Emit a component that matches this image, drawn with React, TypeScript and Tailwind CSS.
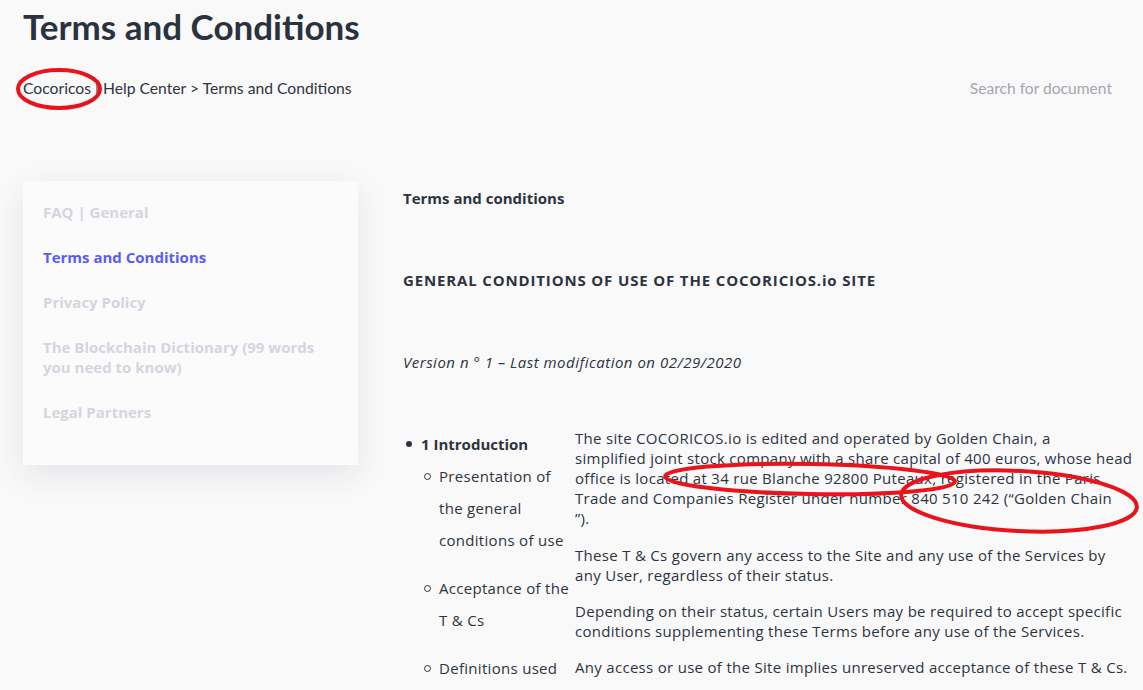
import React from "react";

const sideItems = [
  { label: "FAQ | General", active: false },
  { label: "Terms and Conditions", active: true },
  { label: "Privacy Policy", active: false },
  { label: "The Blockchain Dictionary (99 words you need to know)", active: false },
  { label: "Legal Partners", active: false },
];

// sub entries of the table of contents, wrapped like the page
const subItems = [
  ["Presentation of", "the general", "conditions of use"],
  ["Acceptance of the", "T & Cs"],
  ["Definitions used"],
];

const paragraphs = [
  [
    "The site COCORICOS.io is edited and operated by Golden Chain, a",
    "simplified joint stock company with a share capital of 400 euros, whose head",
    "office is located at 34 rue Blanche 92800 Puteaux, registered in the Paris",
    "Trade and Companies Register under number 840 510 242 (“Golden Chain",
    "”).",
  ],
  [
    "These T & Cs govern any access to the Site and any use of the Services by",
    "any User, regardless of their status.",
  ],
  [
    "Depending on their status, certain Users may be required to accept specific",
    "conditions supplementing these Terms before any use of the Services.",
  ],
  ["Any access or use of the Site implies unreserved acceptance of these T & Cs."],
];

const App: React.FC = () => {
  return (
    <div className="relative w-[1143px] h-[690px] overflow-hidden bg-[#f9f9fa] text-[#2d3440] font-['Open_Sans',sans-serif]">
      {/* header */}
      <div className="px-[23px] pt-[4px] font-['Lato',sans-serif]">
        <h1 className="text-[35px] leading-[44px] font-bold text-[#2b323e]">Terms and Conditions</h1>
        <div className="flex items-center justify-between mt-[29px] pr-[8px]">
          <div className="text-[15.7px] text-[#2f3440]">Cocoricos | Help Center &gt; Terms and Conditions</div>
          <div className="text-[15.6px] text-[#a3a6ad]">Search for document</div>
        </div>
      </div>

      <div className="flex mt-[80px] px-[23px]">
        {/* sidebar */}
        <div className="w-[335px] h-[284px] shrink-0 bg-[#fbfbfc] shadow-[0_10px_30px_rgba(30,35,60,0.09)] px-[20px] pt-[21px]">
          <ul className="flex flex-col gap-[25px]">
            {sideItems.map((it) => (
              <li
                key={it.label}
                className={`text-[15px] leading-[20px] font-bold ${it.active ? "text-[#5a5cf6]" : "text-[#d3d6de]"}`}
              >
                {it.label}
              </li>
            ))}
          </ul>
        </div>

        {/* content */}
        <div className="ml-[45px] flex-1 pt-[7px] text-[15px]">
          <p className="font-bold leading-[20px]">Terms and conditions</p>
          <p className="font-bold leading-[20px] mt-[62px] tracking-[0.85px]">
            GENERAL CONDITIONS OF USE OF THE COCORICIOS.io SITE
          </p>
          <p className="italic leading-[20px] mt-[62px] tracking-[0.5px]">
            Version n ° 1 – Last modification on 02/29/2020
          </p>

          <div className="flex mt-[56px]">
            <div className="w-[172px] shrink-0">
              <div className="flex items-center leading-[32px] font-bold">
                <span className="w-[6px] h-[6px] rounded-full bg-[#2d3440] ml-[3px] mr-[9px]" />
                1 Introduction
              </div>
              <ul className="pl-[21px] flex flex-col gap-[16px] tracking-[0.3px]">
                {subItems.map((lines) => (
                  <li key={lines[0]} className="flex leading-[32px]">
                    <span className="w-[7px] h-[7px] rounded-full border border-[#2d3440] mt-[13px] mr-[8px] shrink-0" />
                    <span className="whitespace-nowrap">
                      {lines.map((l) => (
                        <span key={l} className="block">{l}</span>
                      ))}
                    </span>
                  </li>
                ))}
              </ul>
            </div>
            <div className="leading-[20px] flex flex-col gap-[16px] tracking-[0.3px]">
              {paragraphs.map((lines, i) => (
                <p key={lines[0]} className={`whitespace-nowrap ${i === 1 ? "mt-[1px]" : ""}`}>
                  {lines.map((l) => (
                    <span key={l} className="block">{l}</span>
                  ))}
                </p>
              ))}
            </div>
          </div>
        </div>
      </div>

      {/* red hand-drawn annotations */}
      <svg className="absolute inset-0 pointer-events-none" width="1143" height="690" viewBox="0 0 1143 690">
        <ellipse cx="59" cy="89" rx="41" ry="19" fill="none" stroke="#e8131b" strokeWidth="4" />
        <ellipse cx="810" cy="479" rx="145" ry="15" fill="none" stroke="#e8131b" strokeWidth="4" transform="rotate(1 810 479)" />
        <ellipse cx="1019" cy="501" rx="118" ry="30" fill="none" stroke="#e8131b" strokeWidth="4" transform="rotate(3 1019 501)" />
      </svg>
    </div>
  );
};

export default App;
